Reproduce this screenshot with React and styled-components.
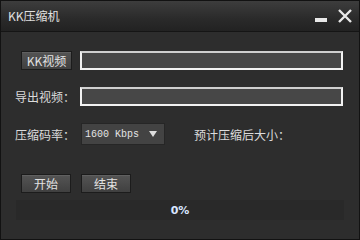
import React from 'react';
import styled, { createGlobalStyle } from 'styled-components';

const GlobalStyle = createGlobalStyle`
  html, body {
    margin: 0;
    padding: 0;
    background: #2d2d2d;
  }
  * {
    box-sizing: border-box;
  }
`;

const Window = styled.div`
  width: 360px;
  height: 240px;
  display: flex;
  flex-direction: column;
  background: #2d2d2d;
  border: 1px solid #121212;
  font-family: "Noto Sans CJK SC", "Noto Sans", sans-serif;
  font-size: 12px;
  color: #dcdcdc;
`;
const TitleBar = styled.div`
  height: 31px;
  flex: none;
  display: flex;
  align-items: center;
  padding: 0 0 0 7px;
  background: linear-gradient(#3d3d3d, #2a2a2a 60%, #222222);
  border-bottom: 1px solid #151515;
`;
const Title = styled.div`
  flex: 1;
  font-size: 12px;
  color: #e0e0e0;
  margin-top: -2px;
`;
const WinButton = styled.div`
  width: 24px;
  height: 24px;
  display: flex;
  align-items: center;
  justify-content: center;
`;
const Body = styled.div`
  padding: 19px 0 0 14px;
  display: flex;
  flex-direction: column;
`;
const Row = styled.div`
  display: flex;
  align-items: center;
  margin-top: ${p => p.gap || 0}px;
`;
const Label = styled.div`
  width: ${p => p.w}px;
  flex: none;
  font-size: 12px;
  color: #dcdcdc;
  margin-left: ${p => p.ml || 0}px;
`;
const Button = styled.button`
  width: ${p => p.w || 50}px;
  height: 19px;
  margin-left: ${p => p.ml || 0}px;
  padding: 0;
  font-family: inherit;
  font-size: 12px;
  color: #e2e2e2;
  background: linear-gradient(#545454, #404040);
  border: 1px solid #1c1c1c;
  box-shadow: inset 0 1px 0 #606060;
`;
const Input = styled.input`
  width: 263px;
  height: 19px;
  margin-left: ${p => p.ml || 0}px;
  background: #474747;
  border: 2px solid #f2f2f2;
  border-top-color: #cfcfcf;
  outline: none;
  color: #eee;
`;
const Select = styled.div`
  width: 84px;
  height: 22px;
  display: flex;
  align-items: center;
  justify-content: space-between;
  padding: 0 7px 0 3px;
  background: #434343;
  border: 1px solid #262626;
  font-family: "Liberation Mono", monospace;
  font-size: 10px;
  color: #e4e4e4;
`;
const Arrow = styled.div`
  width: 0;
  height: 0;
  border-left: 4px solid transparent;
  border-right: 4px solid transparent;
  border-top: 6px solid #dedede;
`;
const Progress = styled.div`
  width: 328px;
  height: 20px;
  margin: 7px 0 0 1px;
  background: #292929;
  display: flex;
  align-items: center;
  justify-content: center;
  font-family: "DejaVu Sans", sans-serif;
  font-size: 11px;
  font-weight: bold;
  color: #d8e6ff;
`;

const App = () => (
  <Window>
    <GlobalStyle />
    <TitleBar>
      <Title>KK压缩机</Title>
      <WinButton>
        <svg width="14" height="14" viewBox="0 0 14 14">
          <rect x="1" y="9" width="12" height="4" fill="#e8e8e8" />
        </svg>
      </WinButton>
      <WinButton style={{ marginRight: 2 }}>
        <svg width="16" height="16" viewBox="0 0 16 16">
          <path d="M2 2 L14 14 M14 2 L2 14" stroke="#e8e8e8" strokeWidth="2.4" />
        </svg>
      </WinButton>
    </TitleBar>
    <Body>
      <Row>
        <Button w={51} ml={6}>KK视频</Button>
        <Input ml={8} />
      </Row>
      <Row gap={17}>
        <Label w={65}>导出视频：</Label>
        <Input />
      </Row>
      <Row gap={17}>
        <Label w={66}>压缩码率：</Label>
        <Select>
          <span>1600 Kbps</span>
          <Arrow />
        </Select>
        <Label w={120} ml={29}>预计压缩后大小：</Label>
      </Row>
      <Row gap={29}>
        <Button ml={6}>开始</Button>
        <Button ml={10}>结束</Button>
      </Row>
      <Progress>0%</Progress>
    </Body>
  </Window>
);

export default App;
